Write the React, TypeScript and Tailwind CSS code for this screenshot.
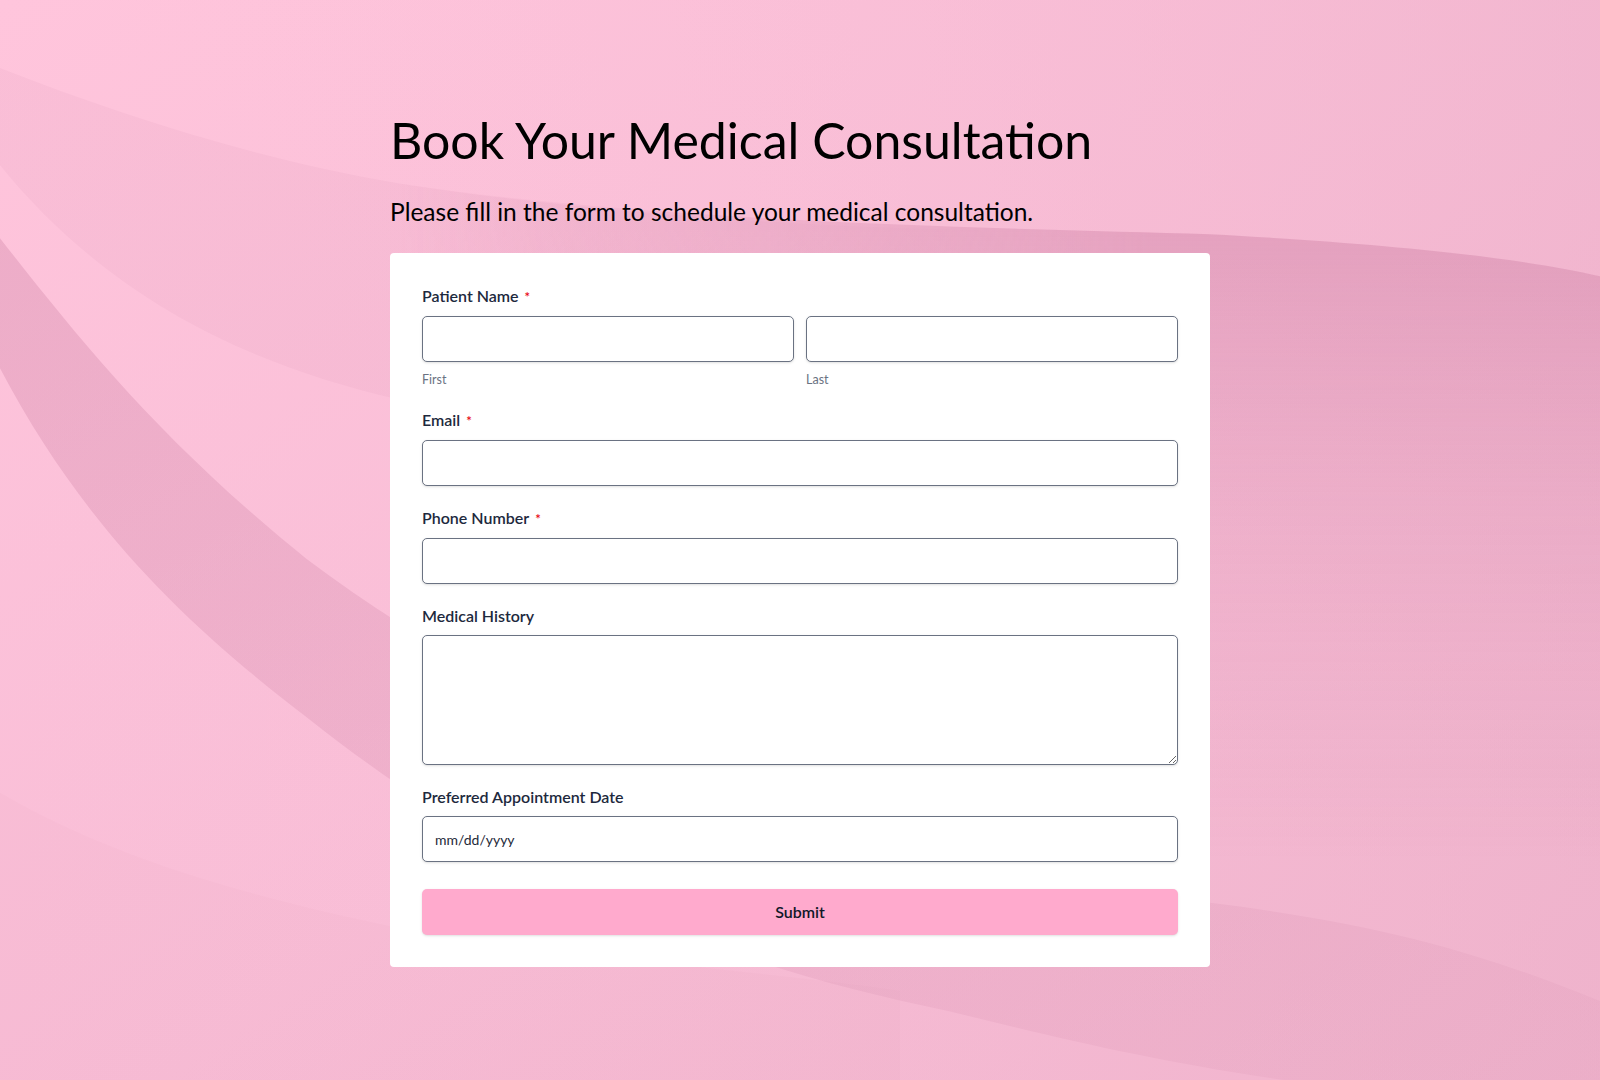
import React from 'react';

const Required = () => <span className="ml-1.5 text-[13px] text-red-600">*</span>;

const inputCls =
  'block h-[46px] w-full rounded-[5px] border border-gray-500 bg-white px-3 text-sm text-gray-800 shadow-sm outline-none';

const labelCls = 'mb-2 text-base font-semibold leading-[22px] text-slate-800';

const Background = () => (
  <svg
    className="absolute inset-0 h-full w-full"
    viewBox="0 0 1600 1080"
    preserveAspectRatio="none"
    aria-hidden="true"
  >
    <defs>
      <linearGradient id="bg" x1="0" y1="0" x2="1" y2="1">
        <stop offset="0" stopColor="#ffc5dc" />
        <stop offset="0.55" stopColor="#f8bdd6" />
        <stop offset="1" stopColor="#f0b4cd" />
      </linearGradient>
      <linearGradient id="topRight" x1="0" y1="0" x2="1" y2="0">
        <stop offset="0" stopColor="#ffc5dc" stopOpacity="0" />
        <stop offset="1" stopColor="#eeb2cb" />
      </linearGradient>
      <linearGradient id="bandTop" gradientUnits="userSpaceOnUse" x1="0" y1="0" x2="1100" y2="0">
        <stop offset="0" stopColor="#c97fa3" stopOpacity="0.09" />
        <stop offset="0.55" stopColor="#c97fa3" stopOpacity="0.09" />
        <stop offset="1" stopColor="#c97fa3" stopOpacity="0" />
      </linearGradient>
      <linearGradient id="rightDark" gradientUnits="userSpaceOnUse" x1="0" y1="230" x2="0" y2="860">
        <stop offset="0" stopColor="#c9799f" stopOpacity="0.38" />
        <stop offset="0.45" stopColor="#c9799f" stopOpacity="0.14" />
        <stop offset="1" stopColor="#c9799f" stopOpacity="0" />
      </linearGradient>
      <linearGradient id="fadeX" gradientUnits="userSpaceOnUse" x1="398" y1="0" x2="1150" y2="0">
        <stop offset="0" stopColor="#000" />
        <stop offset="1" stopColor="#fff" />
      </linearGradient>
      <mask id="rightMask">
        <rect width="1600" height="1080" fill="url(#fadeX)" />
      </mask>
      <linearGradient id="band" x1="0" y1="0" x2="1" y2="1">
        <stop offset="0" stopColor="#c7799d" stopOpacity="0.3" />
        <stop offset="1" stopColor="#c7799d" stopOpacity="0.08" />
      </linearGradient>
    </defs>
    <rect width="1600" height="1080" fill="url(#bg)" />
    <rect width="1600" height="1080" fill="url(#topRight)" opacity="0.6" />
    {/* band between the first two curves, fading out under the card */}
    <path
      d="M0,68 C120,115 260,160 398,183 C650,222 900,230 1100,232 L1100,600 C800,520 600,450 398,399 C250,365 110,300 0,165 Z"
      fill="url(#bandTop)"
    />
    {/* darker area right of the card */}
    <path
      d="M398,183 C650,222 1000,228 1210,234 C1400,244 1520,258 1600,276 L1600,1080 L398,1080 Z"
      fill="url(#rightDark)"
      mask="url(#rightMask)"
    />
    {/* main darker band */}
    <path
      d="M0,238 C80,340 160,440 306,558 C520,720 850,860 1210,902 C1400,925 1500,960 1600,1000 L1600,1080 L1290,1080 C1150,1060 1050,1035 948,1010 C700,960 500,870 306,716 C180,620 80,520 0,368 Z"
      fill="url(#band)"
    />
    {/* lower soft band */}
    <path
      d="M0,792 C100,850 220,890 398,927 C600,960 760,970 900,990 L900,1080 L0,1080 Z"
      fill="#c97fa3"
      opacity="0.04"
    />
  </svg>
);

export default function App() {
  return (
    <div
      className="relative min-h-screen w-full overflow-hidden"
      style={{ fontFamily: 'Lato, "Open Sans", sans-serif' }}
    >
      <Background />
      <div className="relative mx-auto w-[820px] pb-[114px] pt-[111px]">
        <h1 className="text-[50px] font-normal leading-[58px] text-black">Book Your Medical Consultation</h1>
        <p className="mt-[27px] text-[24.5px] leading-8 text-black">
          Please fill in the form to schedule your medical consultation.
        </p>

        <form className="mt-[25px] flex flex-col gap-[21px] rounded bg-white p-8" onSubmit={(e) => e.preventDefault()}>
          <div>
            <div className={labelCls}>
              Patient Name
              <Required />
            </div>
            <div className="grid grid-cols-2 gap-3">
              <div>
                <input type="text" className={inputCls} />
                <div className="mt-2.5 text-[12.5px] leading-4 text-gray-500">First</div>
              </div>
              <div>
                <input type="text" className={inputCls} />
                <div className="mt-2.5 text-[12.5px] leading-4 text-gray-500">Last</div>
              </div>
            </div>
          </div>

          <div>
            <div className={labelCls}>
              Email
              <Required />
            </div>
            <input type="email" className={inputCls} />
          </div>

          <div>
            <div className={labelCls}>
              Phone Number
              <Required />
            </div>
            <input type="tel" className={inputCls} />
          </div>

          <div>
            <div className={labelCls}>Medical History</div>
            <textarea className="block h-[130px] w-full rounded-[5px] border border-gray-500 bg-white px-3 py-2 text-sm text-gray-800 shadow-sm outline-none" />
          </div>

          <div>
            <div className={labelCls}>Preferred Appointment Date</div>
            <input type="text" placeholder="mm/dd/yyyy" className={`${inputCls} placeholder:text-gray-800`} />
          </div>

          <button
            type="submit"
            className="mt-[6px] h-[46px] w-full rounded-[5px] bg-[#ffaacd] text-base font-semibold text-gray-900 shadow-sm"
          >
            Submit
          </button>
        </form>
      </div>
    </div>
  );
}
